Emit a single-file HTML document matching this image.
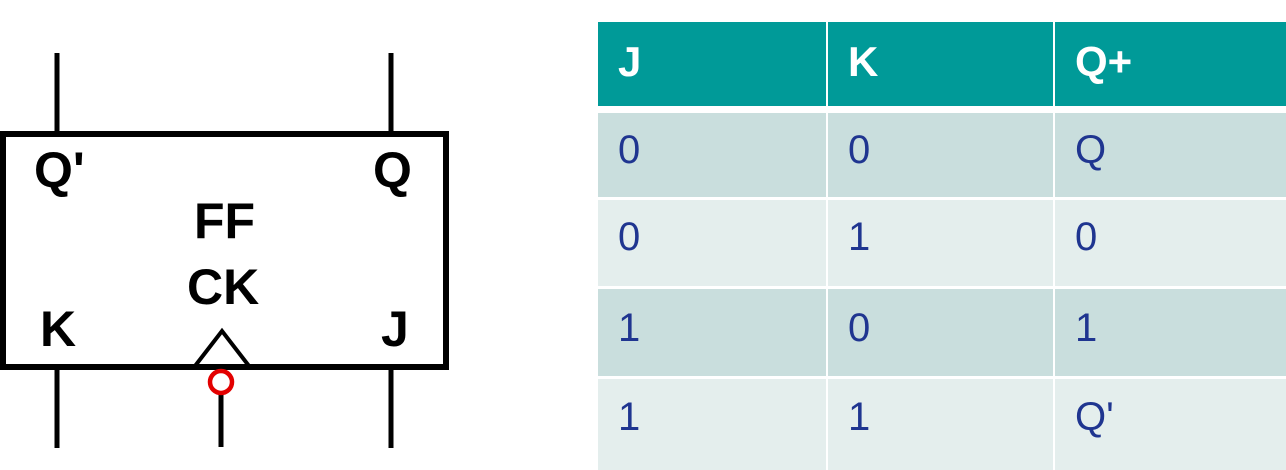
<!DOCTYPE html>
<html><head><style>
body{margin:0;width:1286px;height:470px;background:#fff;overflow:hidden;position:relative;font-family:"Liberation Sans",Arial,sans-serif}
.c{position:absolute;box-sizing:border-box;padding-left:20px;font-size:40px;color:#1f3590;line-height:1}
.h{background:#009a98;color:#fff;font-weight:bold;font-size:42px}
.d{background:#c9dedd}.l{background:#e4eeed}
</style></head><body>
<svg width="460" height="470" style="position:absolute;left:0;top:0">
<g stroke="#000" stroke-width="5" fill="none">
<line x1="57" y1="53" x2="57" y2="133"/><line x1="391" y1="53" x2="391" y2="133"/>
<line x1="57" y1="367" x2="57" y2="448"/><line x1="391" y1="367" x2="391" y2="448"/>
<line x1="221" y1="392" x2="221" y2="447"/>
<rect x="3" y="134" width="443" height="233" stroke-width="6"/>
<polyline points="195,366 222,331 249,366" stroke-width="4"/>
</g>
<circle cx="221" cy="382" r="11" stroke="#e30000" stroke-width="4.5" fill="#fff"/>
<g font-family="Liberation Sans,Arial,sans-serif" font-weight="bold" font-size="50">
<text x="34" y="187">Q'</text><text x="373" y="187">Q</text>
<text x="194" y="238">FF</text><text x="187" y="304">CK</text>
<text x="40" y="346">K</text><text x="381" y="346">J</text>
</g>
</svg>
<div class="c h" style="left:598px;top:22px;width:228px;height:84px;padding-top:19px">J</div>
<div class="c h" style="left:828px;top:22px;width:225px;height:84px;padding-top:19px">K</div>
<div class="c h" style="left:1055px;top:22px;width:231px;height:84px;padding-top:19px">Q+</div>
<div class="c d" style="left:598px;top:113px;width:228px;height:84px;padding-top:17px">0</div>
<div class="c d" style="left:828px;top:113px;width:225px;height:84px;padding-top:17px">0</div>
<div class="c d" style="left:1055px;top:113px;width:231px;height:84px;padding-top:17px">Q</div>
<div class="c l" style="left:598px;top:200px;width:228px;height:86px;padding-top:17px">0</div>
<div class="c l" style="left:828px;top:200px;width:225px;height:86px;padding-top:17px">1</div>
<div class="c l" style="left:1055px;top:200px;width:231px;height:86px;padding-top:17px">0</div>
<div class="c d" style="left:598px;top:289px;width:228px;height:87px;padding-top:19px">1</div>
<div class="c d" style="left:828px;top:289px;width:225px;height:87px;padding-top:19px">0</div>
<div class="c d" style="left:1055px;top:289px;width:231px;height:87px;padding-top:19px">1</div>
<div class="c l" style="left:598px;top:379px;width:228px;height:91px;padding-top:18px">1</div>
<div class="c l" style="left:828px;top:379px;width:225px;height:91px;padding-top:18px">1</div>
<div class="c l" style="left:1055px;top:379px;width:231px;height:91px;padding-top:18px">Q'</div>
</body></html>
